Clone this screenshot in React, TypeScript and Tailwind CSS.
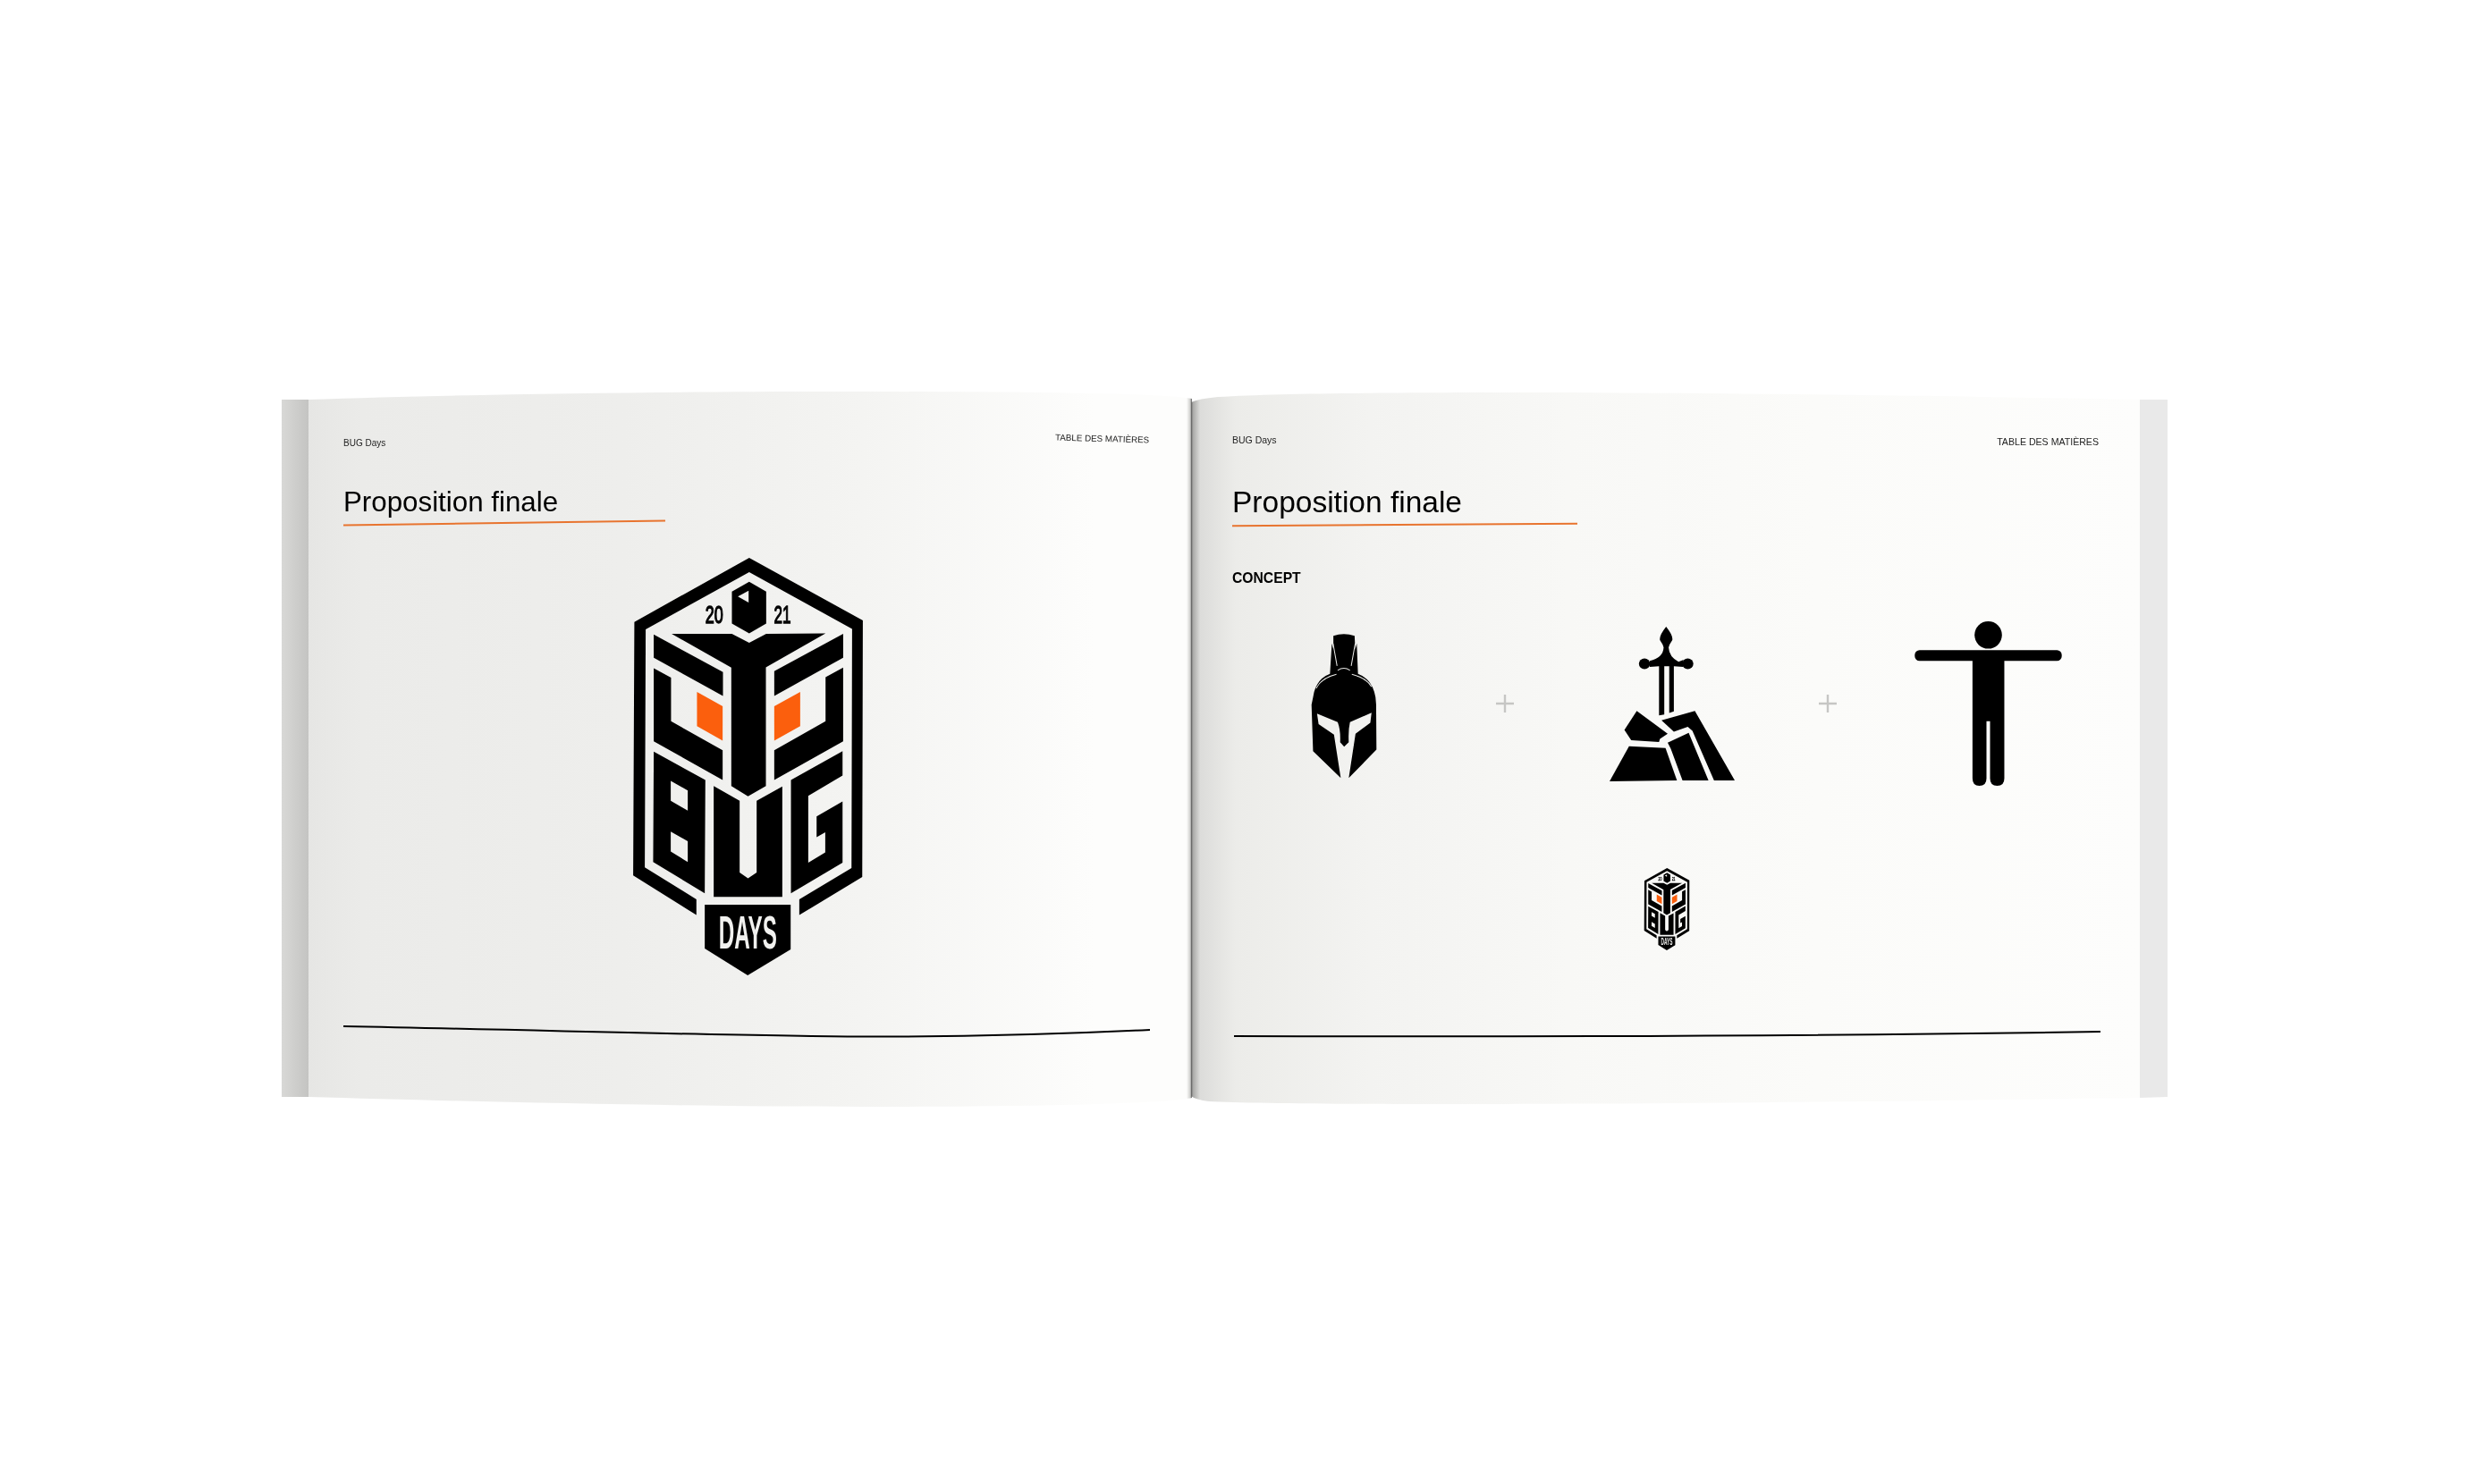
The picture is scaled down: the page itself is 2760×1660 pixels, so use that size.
import React from "react";

const Logo: React.FC<{ className: string }> = ({ className }) => (
  <svg viewBox="83 70 770 1400" className={className}>
    <path d="M472 70 853 280 851 1140 640 1268 640 1215 815 1110 817 308 472 118 125 310 122 1108 295 1215 295 1268 83 1135 87 285Z" />
    <path d="M472 150 529 183 529 290 472 323 414 290 414 183Z" />
    <path d="M470 180 470 220 434 200Z" fill="#f1f1ef" />
    <text x="325" y="288" fontSize="82" stroke="#000" strokeWidth="4" textLength="60" lengthAdjust="spacingAndGlyphs" className="font-['Liberation_Sans']">20</text>
    <text x="555" y="288" fontSize="82" stroke="#000" strokeWidth="4" textLength="57" lengthAdjust="spacingAndGlyphs" className="font-['Liberation_Sans']">21</text>
    {/* T */}
    <path d="M212 325 414 325 472 355 529 325 728 323 528 437 528 835 468 870 412 835 412 438Z" />
    <path d="M152 327 384 453 384 533 152 405Z" />
    <path d="M787 325 556 450 556 533 787 405Z" />
    <path d="M152 440 210 472 210 618 383 715 383 815 152 685Z" />
    <path d="M787 438 728 470 728 618 556 715 556 815 787 685Z" />
    <path d="M297 520 383 568 383 683 297 634Z" fill="#fb5f0d" />
    <path d="M643 520 556 568 556 683 643 634Z" fill="#fb5f0d" />
    {/* B U G */}
    <path fillRule="evenodd" d="M152 720 325 815 323 1195 150 1090ZM209 818 266 850 266 918 209 885ZM209 988 266 1020 266 1090 209 1055Z" />
    <path d="M353 835 440 885 440 1125 468 1145 497 1125 497 885 583 837 583 1207 353 1207Z" />
    <path d="M785 718 785 800 670 868 670 1092 727 1058 727 990 698 1007 698 937 785 887 785 1092 612 1195 612 815Z" />
    <path d="M323 1233 611 1233 611 1383 467 1470 323 1380Z" />
    <text x="370" y="1380" fontSize="155" fontWeight="700" fill="#f1f1ef" textLength="195" lengthAdjust="spacingAndGlyphs" className="font-['Liberation_Sans']">DAYS</text>
  </svg>
);

const Helmet = () => (
  <svg viewBox="135 145 215 487" preserveAspectRatio="none" className="w-[74px] h-[163px] mt-[5px]">
    <path d="M208 155Q242 143 277 155L279 200 284 180 288 282Q335 300 345 360L347 385 348 535 258 630 280 482 328 445 332 412 262 443Q256 470 258 510L243 525 230 510Q232 470 222 443L155 415 160 450 210 485 232 630 142 540 137 385 142 360Q150 300 197 282L203 180 208 200Z" />
    <path d="M207 180 220 255M279 180 266 255M222 270Q242 256 262 270M152 330Q170 295 218 283M332 325Q315 295 268 283" stroke="#e8e8e6" strokeWidth="3" fill="none" />
  </svg>
);

const Sword = () => (
  <svg viewBox="1102 120 405 520" preserveAspectRatio="none" className="w-[140px] h-[173px]">
    <path d="M1285 120Q1308 150 1305 165 1295 180 1293 190 1295 222 1325 238L1340 232 1340 255 1310 253 1310 405 1295 410 1295 253 1279 253 1279 415 1262 418 1262 253 1232 255 1232 235Q1275 225 1277 190 1275 180 1265 165 1262 150 1285 120Z" />
    <circle cx="1215" cy="245" r="18" />
    <circle cx="1355" cy="245" r="18" />
    <path d="M1190 403 1290 480 1265 497 1262 508 1172 502 1150 467Z" />
    <path d="M1270 435 1378 403 1507 637 1440 637 1370 470 1355 457 1310 473Z" />
    <path d="M1290 510 1358 477 1422 637 1338 637 1300 530Z" />
    <path d="M1165 522 1283 528 1320 637 1102 640Z" />
  </svg>
);

const Person = () => (
  <svg viewBox="304 104 494 553" className="w-[165px] h-[184px]">
    <circle cx="551" cy="150" r="46" />
    <rect x="304" y="201" width="494" height="36" rx="16" />
    <path d="M498 210H605V632Q605 657 581 657 557 657 557 632V440H545V632Q545 657 521 657 498 657 498 632Z" />
  </svg>
);

const PlusMark = () => (
  <svg viewBox="0 0 20 20" className="w-5 h-5">
    <path d="M0 10H20M10 0V20" stroke="#c6c6c4" strokeWidth="2.4" />
  </svg>
);

export default function App() {
  return (
    <div className="w-[2760px] h-[1660px] bg-white pt-[438px] pl-[315px] font-['Liberation_Sans',sans-serif] text-black overflow-hidden">
      <div className="flex h-[800px] blur-[0.5px]">
        {/* left page */}
        <div className="flex w-[1018px] h-[800px] [clip-path:path('M0_9L30_9C200_3,450_0,600_0C800_0,980_1,1018_8L1018_790C980_798,800_800,650_800C450_800,200_794,30_789L0_789Z')]">
          <div className="w-[30px] bg-[linear-gradient(90deg,#d8d8d6,#c4c4c2)]" />
          <div className="w-[988px] pl-[39px] pr-[48px] pt-[46px] bg-[linear-gradient(90deg,#e6e6e4_0px,#ebebe9_60px,#eeeeec_350px,#f4f4f2_620px,#fdfdfc_880px,#fdfdfc_982px,#cfcfcd_986px,#5f5f5f_988px)]">
            <div className="flex justify-between items-start h-[15px]">
              <span className="text-[10px] leading-[14px] mt-[5px] text-[#222]">BUG Days</span>
              <span className="text-[9.800px] leading-[14px] text-[#222] rotate-[1.6deg]">TABLE DES MATIÈRES</span>
            </div>
            <h1 className="text-[31.300px] leading-[36px] mt-[46px] -translate-y-[1px]">Proposition finale</h1>
            <div className="w-[360px] h-[2px] mt-[3px] bg-[#e8742f] rotate-[-0.8deg]" />
            <Logo className="w-[257px] h-[467px] ml-[324px] mt-[38px]" />
            <svg viewBox="0 0 902 14" className="w-[902px] h-[14px] mt-[56px]">
              <path d="M0 1C250 6 450 12 580 12.500C720 13 820 9 902 5" stroke="#000" strokeWidth="2" fill="none" />
            </svg>
          </div>
        </div>
        {/* right page */}
        <div className="flex w-[1092px] h-[800px] -ml-[1px] [clip-path:path('M0_12Q8_8,30_6C100_2,200_1,400_1C700_2,900_6,1061_9L1092_9L1092_789L1061_790C800_794,500_797,300_797C150_797,60_796,20_794Q5_792,0_788Z')]">
          <div className="w-[1061px] pl-[46px] pr-[46px] pt-[47px] bg-[linear-gradient(90deg,#555_0px,#a8a8a6_2px,#dcdcda_10px,#ecece9_50px,#f3f3f1_200px,#f8f8f6_420px,#fbfbf9_700px,#fdfdfc_1061px)]">
            <div className="flex justify-between items-start h-[15px]">
              <span className="text-[10.500px] leading-[14px] text-[#222]">BUG Days</span>
              <span className="text-[10.600px] leading-[14px] mt-[2px] text-[#222]">TABLE DES MATIÈRES</span>
            </div>
            <h1 className="text-[33.500px] leading-[38px] mt-[43px]">Proposition finale</h1>
            <div className="w-[386px] h-[2px] mt-[5px] bg-[#e8742f] rotate-[-0.4deg]" />
            <p className="text-[15.700px] leading-[18px] font-bold mt-[50px]">CONCEPT</p>
            <div className="flex items-center h-[184px] mt-[39px]">
              <div className="ml-[88px]"><Helmet /></div>
              <div className="ml-[133px]"><PlusMark /></div>
              <div className="ml-[107px]"><Sword /></div>
              <div className="ml-[94px]"><PlusMark /></div>
              <div className="ml-[87px]"><Person /></div>
            </div>
            <Logo className="w-[54px] h-[92px] ml-[459px] mt-[92px]" />
            <svg viewBox="0 0 969 8" className="w-[969px] h-[8px] ml-[2px] mt-[90px]">
              <path d="M0 6C300 7 650 6 969 1" stroke="#000" strokeWidth="2" fill="none" />
            </svg>
          </div>
          <div className="w-[31px] bg-[#e9e9e9]" />
        </div>
      </div>
    </div>
  );
}
